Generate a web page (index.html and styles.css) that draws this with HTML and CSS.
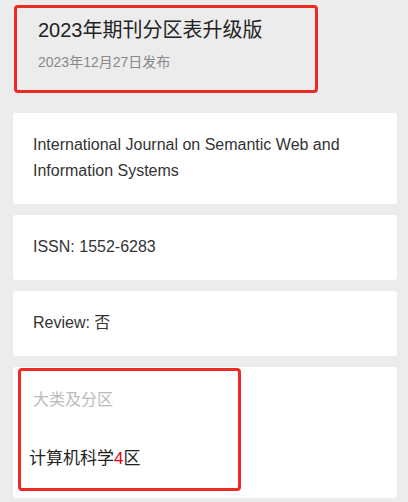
FILE: index.html
```html
<!DOCTYPE html>
<html lang="zh-CN">
<head>
  <meta charset="UTF-8" />
  <meta name="viewport" content="width=device-width, initial-scale=1.0"/>
  <title>期刊分区</title>
  <link rel="stylesheet" href="styles.css">
</head>
<body>

  <div class="header">
    <h1 class="title">2023年期刊分区表升级版</h1>
    <p class="date">2023年12月27日发布</p>
  </div>

  <div class="list">
    <div class="card">
      International Journal on Semantic Web and Information Systems
    </div>
    <div class="card">ISSN: 1552-6283</div>
    <div class="card">Review: 否</div>
    <div class="card zone-card">
      <div class="zone-box">
        <div class="zone-label">大类及分区</div>
        <div class="zone-value">计算机科学<span class="rank">4</span>区</div>
      </div>
    </div>
  </div>

</body>
</html>
```

FILE: styles.css
```css
body {
  margin: 0;
  background: #ececec;
  font-family: "Liberation Sans", Arial, "Noto Sans CJK SC", sans-serif;
  color: #333;
}

.header {
  width: 277px;
  margin: 5px 0 0 14px;
  padding: 8px 0 18px 21px;
  border: 3px solid #ee2a24;
  border-radius: 4px;
}

.title {
  margin: 0;
  font-size: 20px;
  font-weight: normal;
  line-height: 28px;
  color: #222;
}

.date {
  margin: 8px 0 0;
  font-size: 14px;
  line-height: 20px;
  color: #888;
}

.list {
  display: flex;
  flex-direction: column;
  gap: 11px;
  padding: 20px 11px 0 13px;
}

.card {
  background: white;
  border-radius: 3px;
  padding: 19px 20px 20px;
  font-size: 16px;
  line-height: 26px;
  color: #333;
}

.zone-card {
  padding: 1px 0 7px 5px;
}

.zone-box {
  width: 217px;
  padding: 16px 0 16px;
  border: 3px solid #ee2a24;
  border-radius: 4px;
}

.zone-label {
  padding-left: 12px;
  font-size: 16px;
  line-height: 26px;
  color: #bbb;
}

.zone-value {
  margin-top: 33px;
  padding-left: 8px;
  font-size: 17px;
  line-height: 26px;
  color: #222;
}

.rank {
  color: #e60012;
}
```
